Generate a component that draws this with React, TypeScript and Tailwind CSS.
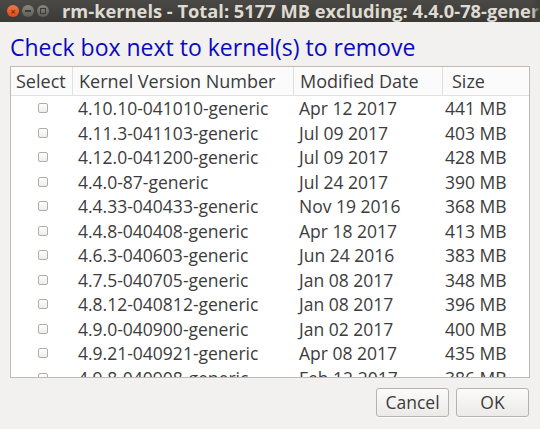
const rows = [
  ['4.10.10-041010-generic', 'Apr 12 2017', '441 MB'],
  ['4.11.3-041103-generic', 'Jul 09 2017', '403 MB'],
  ['4.12.0-041200-generic', 'Jul 09 2017', '428 MB'],
  ['4.4.0-87-generic', 'Jul 24 2017', '390 MB'],
  ['4.4.33-040433-generic', 'Nov 19 2016', '368 MB'],
  ['4.4.8-040408-generic', 'Apr 18 2017', '413 MB'],
  ['4.6.3-040603-generic', 'Jun 24 2016', '383 MB'],
  ['4.7.5-040705-generic', 'Jan 08 2017', '348 MB'],
  ['4.8.12-040812-generic', 'Jan 08 2017', '396 MB'],
  ['4.9.0-040900-generic', 'Jan 02 2017', '400 MB'],
  ['4.9.21-040921-generic', 'Apr 08 2017', '435 MB'],
  ['4.9.8-040908-generic', 'Feb 12 2017', '386 MB'],
]

function WindowButtons() {
  return (
    <div className="flex items-center gap-[3px] pl-[7px]">
      <span className="w-[12px] h-[12px] rounded-full bg-gradient-to-b from-[#f07746] to-[#df4a16] flex items-center justify-center text-[9px] leading-none text-[#7a2a0c] font-bold">×</span>
      <span className="w-[12px] h-[12px] rounded-full bg-gradient-to-b from-[#8a8883] to-[#5d5c57] flex items-center justify-center">
        <span className="w-[6px] h-[2px] bg-[#3c3b37]" />
      </span>
      <span className="w-[12px] h-[12px] rounded-full bg-gradient-to-b from-[#8a8883] to-[#5d5c57] flex items-center justify-center">
        <span className="w-[6px] h-[6px] border border-[#3c3b37]" />
      </span>
    </div>
  )
}

export default function App() {
  return (
    <div className="w-[540px] h-[429px] bg-[#f2f1f0] flex flex-col overflow-hidden text-[#3c3c3c]" style={{ fontFamily: '"Open Sans", "Noto Sans", sans-serif' }}>
      {/* title bar */}
      <div className="relative h-[22px] shrink-0 bg-gradient-to-b from-[#4a4945] to-[#3a3935] flex items-center gap-[13px] overflow-hidden whitespace-nowrap">
        <WindowButtons />
        <span className="text-[18.3px] leading-[22px] font-bold text-[#dfdbd2]">rm-kernels - Total: 5177 MB excluding: 4.4.0-78-generic</span>
        {/* fade where the title is cut */}
        <span className="absolute right-0 top-0 h-full w-[8px] bg-gradient-to-r from-transparent to-[#3f3e3a]" />
      </div>

      <div className="px-[10px] pt-[11px] text-[23px] leading-[28px] text-[#0a0ac0] whitespace-nowrap">
        Check box next to kernel(s) to remove
      </div>

      {/* table */}
      <div className="mx-[10px] mt-[5px] h-[312px] border border-[#bdbbb7] bg-white overflow-hidden text-[17.5px]">
        <div className="flex h-[29px] border-b border-[#e2e0dd] bg-[#fbfbfb] items-center whitespace-nowrap text-[18px]">
          <div className="w-[62px] pl-[5px] border-r border-[#e2e0dd] h-full flex items-center">Select</div>
          <div className="w-[221px] pl-[6px] border-r border-[#e2e0dd] h-full flex items-center">Kernel Version Number</div>
          <div className="w-[149px] pl-[6px] border-r border-[#e2e0dd] h-full flex items-center">Modified Date</div>
          <div className="w-[86px] pl-[9px] h-full flex items-center">Size</div>
        </div>
        {rows.map(([ver, date, size]) => (
          <div key={ver} className="flex h-[24.5px] items-center whitespace-nowrap">
            <div className="w-[62px] flex justify-center pl-[2px]">
              <span className="w-[10px] h-[10px] rounded-[2px] border border-[#b0aeaa] bg-gradient-to-b from-white to-[#eeedeb]" />
            </div>
            <div className="w-[221px] pl-[5px]">{ver}</div>
            <div className="w-[149px] pl-[5px]">{date}</div>
            <div className="w-[86px] pl-[2px]">{size}</div>
          </div>
        ))}
      </div>

      {/* buttons */}
      <div className="flex justify-end gap-[7px] pr-[11px] pt-[10px]">
        <button className="w-[73px] h-[29px] rounded-[3px] border border-[#b5b3af] bg-gradient-to-b from-[#fbfbfa] to-[#eceae8] text-[17.5px] text-[#3c3c3c] shadow-[0_1px_0_rgba(255,255,255,0.8)]">Cancel</button>
        <button className="w-[73px] h-[29px] rounded-[3px] border border-[#b5b3af] bg-gradient-to-b from-[#fbfbfa] to-[#eceae8] text-[17.5px] text-[#3c3c3c] shadow-[0_1px_0_rgba(255,255,255,0.8)]">OK</button>
      </div>
    </div>
  )
}
